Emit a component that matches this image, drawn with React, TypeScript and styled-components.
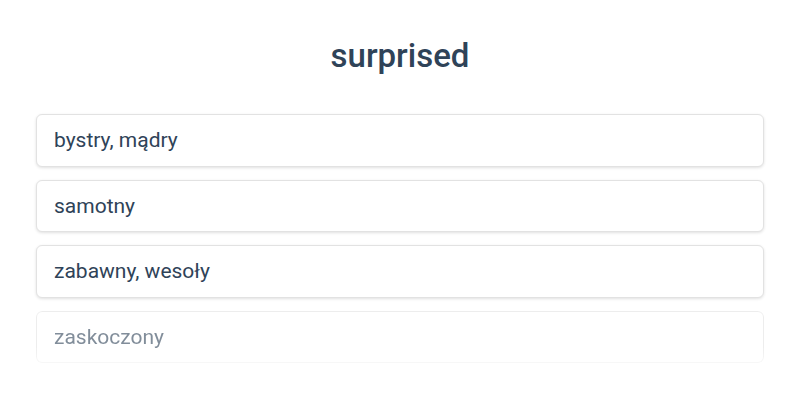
import styled, { createGlobalStyle } from "styled-components";

const GlobalStyle = createGlobalStyle`
	body {
		margin: 0;
		background: #ffffff;
		font-family: Roboto, "Noto Sans", sans-serif;
	}
`;

const Page = styled.main`
	padding: 36px 36px 0;
	display: flex;
	flex-direction: column;
	align-items: stretch;
`;

const Title = styled.h1`
	margin: 0 0 38px;
	text-align: center;
	font-size: 33px;
	font-weight: 500;
	line-height: 40px;
	color: #2f4358;
`;

const Options = styled.ul`
	list-style: none;
	margin: 0;
	padding: 0;
	display: flex;
	flex-direction: column;
	gap: 13px;
`;

const Option = styled.li<{ $faded?: boolean }>`
	height: 52.5px;
	box-sizing: border-box;
	padding: 0 17px;
	display: flex;
	align-items: center;
	background: #fff;
	border: 1px solid #e2e2e2;
	border-radius: 6px;
	box-shadow: 0 1px 3px rgba(0, 0, 0, 0.12);
	font-size: 21px;
	color: #2f4358;
	${(p) =>
		p.$faded &&
		`
		opacity: 0.6;
		-webkit-mask-image: linear-gradient(to bottom, #000 70%, rgba(0,0,0,0.45));
		mask-image: linear-gradient(to bottom, #000 70%, rgba(0,0,0,0.45));
	`}
`;

const words = ["bystry, mądry", "samotny", "zabawny, wesoły", "zaskoczony"];

const App = () => {
	return (
		<>
			<GlobalStyle />
			<Page>
				<Title>surprised</Title>
				<Options>
					{words.map((w, i) => (
						<Option key={w} $faded={i === words.length - 1}>
							{w}
						</Option>
					))}
				</Options>
			</Page>
		</>
	);
};

export default App;
